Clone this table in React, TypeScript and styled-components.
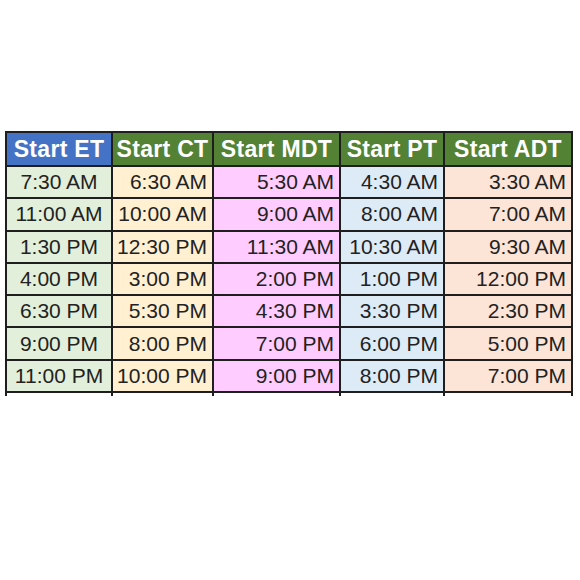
import React from 'react'
import styled, { createGlobalStyle } from 'styled-components'

const GlobalStyle = createGlobalStyle`
  html, body {
    margin: 0;
    padding: 0;
    background: #ffffff;
  }
  body {
    font-family: 'Liberation Sans', Arial, sans-serif;
  }
`

type Zone = {
  label: string
  head: string
  bg: string
  align: 'center' | 'right'
}

const zones: Zone[] = [
  { label: 'Start ET', head: '#4472c4', bg: '#e2efda', align: 'center' },
  { label: 'Start CT', head: '#548235', bg: '#fff0d2', align: 'right' },
  { label: 'Start MDT', head: '#548235', bg: '#ffccff', align: 'right' },
  { label: 'Start PT', head: '#548235', bg: '#ddebf7', align: 'right' },
  { label: 'Start ADT', head: '#548235', bg: '#fce4d6', align: 'right' },
]

const rows = [
  ['7:30 AM', '6:30 AM', '5:30 AM', '4:30 AM', '3:30 AM'],
  ['11:00 AM', '10:00 AM', '9:00 AM', '8:00 AM', '7:00 AM'],
  ['1:30 PM', '12:30 PM', '11:30 AM', '10:30 AM', '9:30 AM'],
  ['4:00 PM', '3:00 PM', '2:00 PM', '1:00 PM', '12:00 PM'],
  ['6:30 PM', '5:30 PM', '4:30 PM', '3:30 PM', '2:30 PM'],
  ['9:00 PM', '8:00 PM', '7:00 PM', '6:00 PM', '5:00 PM'],
  ['11:00 PM', '10:00 PM', '9:00 PM', '8:00 PM', '7:00 PM'],
]

export default function App() {
  return (
    <Page>
      <GlobalStyle />
      <Sheet>
        {zones.map((z) => (
          <HeadCell key={z.label} $bg={z.head}>
            {z.label}
          </HeadCell>
        ))}
        {rows.map((row, r) =>
          row.map((time, c) => (
            <Cell key={r + '-' + c} $bg={zones[c].bg} $align={zones[c].align}>
              {time}
            </Cell>
          ))
        )}
        {zones.map((z) => (
          <Stub key={'stub-' + z.label} />
        ))}
      </Sheet>
    </Page>
  )
}

const Page = styled.div`
  width: 580px;
  height: 580px;
  background: #ffffff;
  padding: 131px 0 0 5px;
  box-sizing: border-box;
`

const Sheet = styled.div`
  display: inline-grid;
  grid-template-columns: 104px 99px 125px 102px 126px;
  grid-template-rows: 32px repeat(7, 30.3px) 3px;
  gap: 2px;
  padding: 2px 2px 0 2px;
  background: #1e1e1e;
`

const HeadCell = styled.div<{ $bg: string }>`
  background: ${(p) => p.$bg};
  color: #ffffff;
  font-weight: bold;
  font-size: 23px;
  letter-spacing: 0.3px;
  white-space: nowrap;
  display: flex;
  align-items: center;
  justify-content: center;
  overflow: hidden;
`

const Cell = styled.div<{ $bg: string; $align: 'center' | 'right' }>`
  background: ${(p) => p.$bg};
  color: #222222;
  font-size: 21px;
  white-space: nowrap;
  display: flex;
  align-items: center;
  justify-content: ${(p) => (p.$align === 'center' ? 'center' : 'flex-end')};
  padding: 0 5px;
`

const Stub = styled.div`
  background: #ffffff;
`
